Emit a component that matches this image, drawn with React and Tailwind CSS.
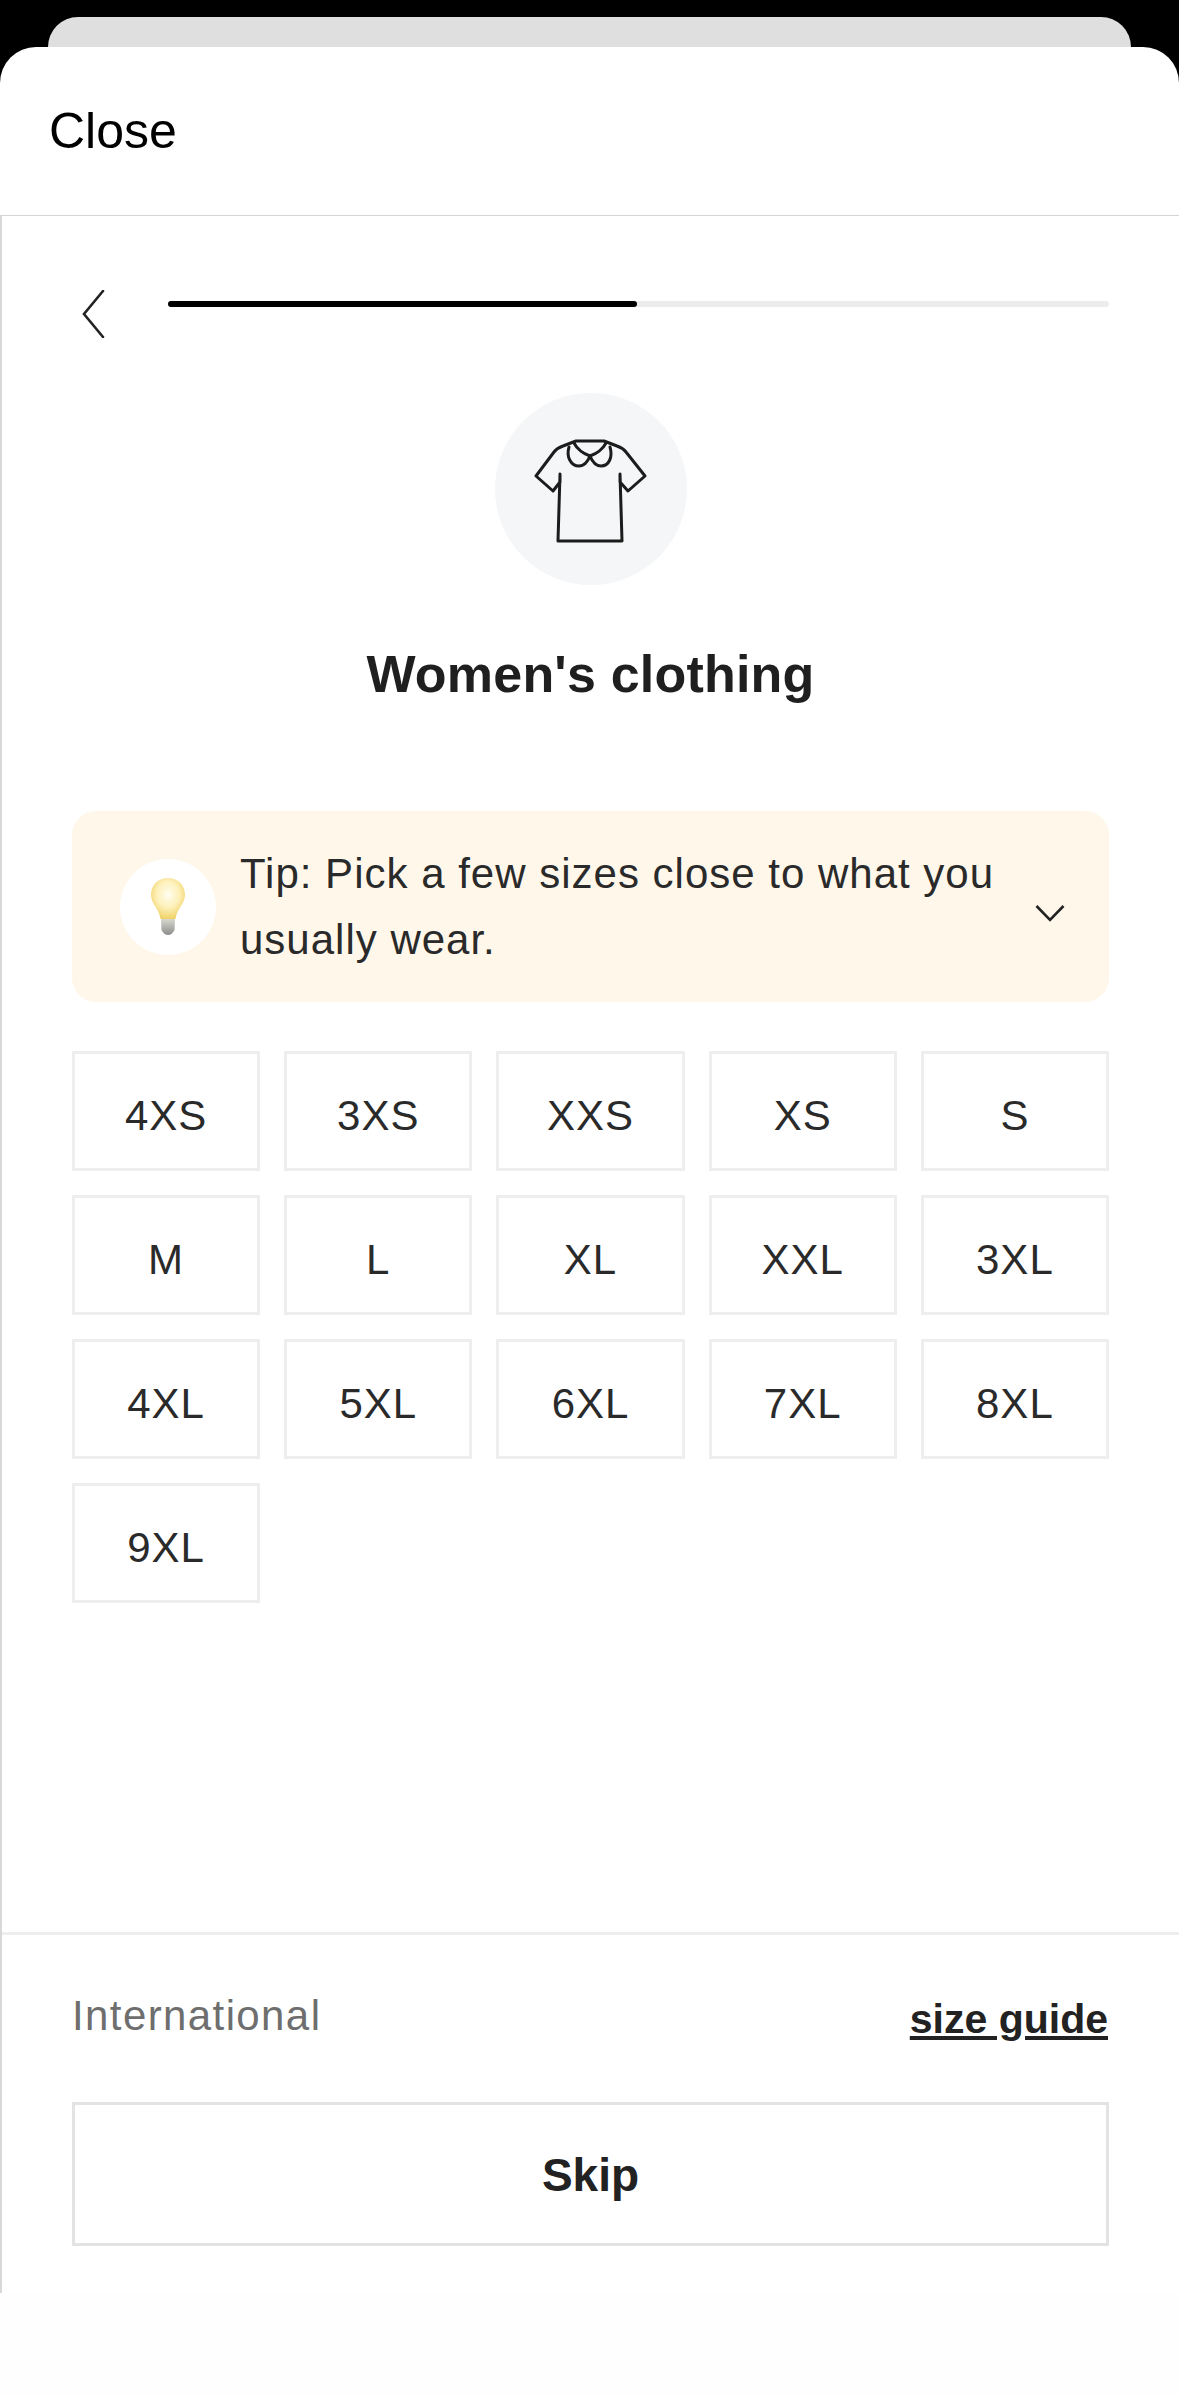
import React from "react";

const sizes = ["4XS", "3XS", "XXS", "XS", "S", "M", "L", "XL", "XXL", "3XL", "4XL", "5XL", "6XL", "7XL", "8XL", "9XL"];

const TeeIcon = () => (
  <svg width="120" height="115" viewBox="60 50 120 115" fill="none" stroke="#1c1c1c" strokeWidth="3" strokeLinejoin="round" strokeLinecap="round">
    <path d="M89 92 V100 L82 109 L65 94 L83 70 Q86 66 92 64 L105 59 H133 L146 64 Q152 66 155 70 L174 94 L157 109 L149 100 V92 L151 159 H87 L89 92" />
    {/* collar lobes */}
    <path d="M98 65 C95 75 100 84 108 84 C113 84 117 79 119 74 C121 79 125 84 130 84 C138 84 142 75 139 65" />
    <path d="M103 61 C106 67 113 72 119 74 C125 72 132 67 135 61" />
  </svg>
);

const BulbIcon = () => (
  <svg width="36" height="60" viewBox="0 0 36 60">
    <defs>
      <radialGradient id="bulbGlass" cx="50%" cy="40%" r="60%">
        <stop offset="0%" stopColor="#fffdf0" />
        <stop offset="55%" stopColor="#fdf0b8" />
        <stop offset="100%" stopColor="#f0d268" />
      </radialGradient>
      <linearGradient id="bulbBase" x1="0" y1="0" x2="0" y2="1">
        <stop offset="0%" stopColor="#d8d8d0" />
        <stop offset="100%" stopColor="#8c8c8c" />
      </linearGradient>
    </defs>
    <path d="M18 1 C8 1 1 8 1 18 C1 27 9 31 10.5 42 H25.5 C27 31 35 27 35 18 C35 8 28 1 18 1 Z" fill="url(#bulbGlass)" />
    <path d="M11 42 H25 L24.5 53 Q22 58 18 58 Q14 58 11.5 53 Z" fill="url(#bulbBase)" />
  </svg>
);

const App = () => {
  return (
    <div className="w-[1179px] h-[2396px] bg-black flex flex-col pt-[17px] font-['Liberation_Sans',sans-serif] text-[#222222]">
      <div className="mx-[48px] h-[30px] shrink-0 rounded-t-[30px] bg-[#dfdfdf]" />

      <div className="flex-1 flex flex-col bg-white rounded-t-[36px]">
        {/* Sheet header */}
        <div className="h-[169px] shrink-0 flex items-center pl-[49px] border-b border-[#d4d4d4]">
          <span className="text-[50px] leading-none text-black">Close</span>
        </div>

        <div className="flex-1 flex flex-col border-l-2 border-[#d8d8d8]">
          <div className="flex-1 flex flex-col px-[70px]">
            {/* Back button and step progress */}
            <div className="flex items-start pt-[74px] gap-[63px] pl-[10px]">
              <svg width="23" height="48" viewBox="0 0 23 48" fill="none" stroke="#222222" strokeWidth="2.6" strokeLinecap="round">
                <path d="M21 1 L2 24 L21 47" />
              </svg>
              <div className="flex-1 h-[6px] mt-[11px] rounded-full bg-[#ececec]">
                <div className="w-[469px] h-[6px] rounded-full bg-black" />
              </div>
            </div>

            <div className="mt-[55px] w-[192px] h-[192px] mx-auto rounded-full bg-[#f4f6f7] flex items-center justify-center">
              <TeeIcon />
            </div>

            <h1 className="mt-[59px] text-center text-[52px] leading-[60px] tracking-[0.2px] font-bold text-[#1f1f1f]">Women's clothing</h1>

            {/* Tip banner */}
            <div className="mt-[107px] h-[191px] rounded-[24px] bg-[#fff7ea] flex items-center pl-[48px] pr-[44px]">
              <div className="w-[96px] h-[96px] shrink-0 rounded-full bg-white flex items-center justify-center">
                <BulbIcon />
              </div>
              <p className="ml-[24px] flex-1 text-[42px] leading-[66px] tracking-[1px] text-[#2a2a2a]">
                Tip: Pick a few sizes close to what you usually wear.
              </p>
              <svg width="30" height="18" viewBox="0 0 30 18" fill="none" stroke="#222222" strokeWidth="2.6" className="shrink-0 mt-[12px]">
                <path d="M1.5 2 L15 16 L28.5 2" />
              </svg>
            </div>

            {/* Size options */}
            <div className="mt-[49px] grid grid-cols-5 gap-x-[24px] gap-y-[24px]">
              {sizes.map((size) => (
                <div key={size} className="h-[120px] border-[3px] border-[#eeeeee] flex items-center justify-center pt-[9px] text-[42px] tracking-[1px] text-[#2a2a2a]">
                  {size}
                </div>
              ))}
            </div>
          </div>

          {/* Footer */}
          <div className="h-[361px] shrink-0 border-t-[3px] border-[#eeeeee] px-[70px]">
            <div className="flex items-start justify-between pt-[55px]">
              <span className="mt-[2px] text-[42px] leading-[48px] tracking-[1.4px] text-[#6e6e6e]">International</span>
              <a className="mt-[5px] mr-[1px] text-[41px] leading-[48px] font-bold underline text-[#222222]">size guide</a>
            </div>
            <button className="mt-[59px] w-full h-[144px] pt-[2px] border-[3px] border-[#e3e3e3] bg-white text-[46px] font-bold text-[#222222]">
              Skip
            </button>
          </div>
        </div>

        <div className="h-[103px] shrink-0 bg-[#fefefe]" />
      </div>
    </div>
  );
};

export default App;
